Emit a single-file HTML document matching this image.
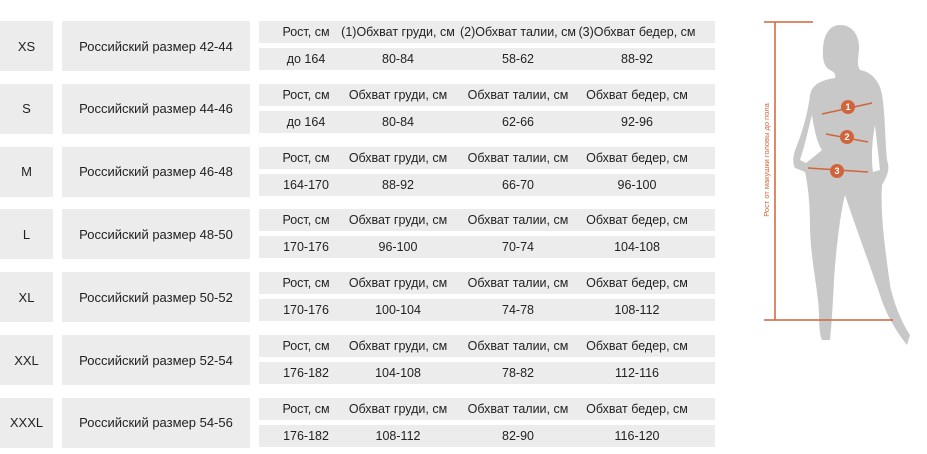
<!DOCTYPE html><html><head><meta charset="utf-8"><style>
body{margin:0;width:927px;height:454px;background:#fff;font-family:"Liberation Sans",sans-serif;font-size:13px;color:#222;position:relative;overflow:hidden}
.c{position:absolute;background:#ececec;display:flex;align-items:center;justify-content:center;white-space:nowrap}
.s{position:absolute;left:259px;width:456px;height:22px;background:#ececec;font-size:12.5px}
.s span{position:absolute;top:0;line-height:22px;transform:translateX(-50%);white-space:nowrap}
</style></head><body>
<div id="t"></div>
<script>
var d=[["XS","42-44","до 164","80-84","58-62","88-92",1],["S","44-46","до 164","80-84","62-66","92-96"],["M","46-48","164-170","88-92","66-70","96-100"],["L","48-50","170-176","96-100","70-74","104-108"],["XL","50-52","170-176","100-104","74-78","108-112"],["XXL","52-54","176-182","104-108","78-82","112-116"],["XXXL","54-56","176-182","108-112","82-90","116-120"]];
var h="";d.forEach(function(r,i){var y=21+i*62.8;
h+='<div class="c" style="left:0;top:'+y+'px;width:53px;height:50px">'+r[0]+'</div>';
h+='<div class="c" style="left:62px;top:'+y+'px;width:188px;height:50px">Российский размер '+r[1]+'</div>';
var hd=r[6]?["Рост, см","(1)Обхват груди, см","(2)Обхват талии, см","(3)Обхват бедер, см"]:["Рост, см","Обхват груди, см","Обхват талии, см","Обхват бедер, см"];
var xs=[306,398,518,637];
h+='<div class="s" style="top:'+y+'px">'+hd.map(function(t,k){return '<span style="left:'+(xs[k]-259)+'px">'+t+'</span>'}).join('')+'</div>';
h+='<div class="s" style="top:'+(y+27)+'px">'+[r[2],r[3],r[4],r[5]].map(function(t,k){return '<span style="left:'+(xs[k]-259)+'px">'+t+'</span>'}).join('')+'</div>';
});document.getElementById('t').innerHTML=h;
</script>
<svg style="position:absolute;left:0;top:0" width="927" height="454">
<path fill="#c8c8c8" d="M840 25 C828 25 822 38 823 55 C823 63 826 68 830 70 C834 72 836 74 835 78 C822 80 812 84 810 95 C808 112 803 130 797 145 C793 155 792 162 795 168 L805 172 C808 185 810 205 810 225 C810 250 815 275 818 300 C820 318 818 330 822 340 L830 340 C832 320 833 300 834 280 C836 250 840 215 845 195 C855 225 868 260 880 295 C885 312 895 330 907 345 L910 335 C900 320 893 300 890 285 C886 255 880 215 882 185 C888 175 890 168 887 160 C885 140 885 110 882 95 C880 82 872 72 860 70 C857 66 858 60 859 50 C860 35 852 25 840 25 Z M812 115 C814 130 818 145 822 150 C816 155 810 160 806 163 L800 160 C805 145 808 130 812 115 Z M875 125 L880 170 L873 172 C871 160 872 140 875 125 Z" />
<g stroke="#d0643c" stroke-width="1.5" fill="none">
<line x1="764" y1="22" x2="813" y2="22"/><line x1="764" y1="320" x2="893" y2="320"/><line x1="775" y1="22" x2="775" y2="320"/>
<line x1="822" y1="114" x2="872" y2="103"/><line x1="826" y1="134" x2="868" y2="142"/><line x1="808" y1="168" x2="868" y2="172"/>
</g>
<g fill="#d0643c"><circle cx="848" cy="107" r="7"/><circle cx="847" cy="137" r="7"/><circle cx="837" cy="171" r="7"/></g>
<g fill="#fff" font-size="9" font-weight="bold" text-anchor="middle"><text x="848" y="110">1</text><text x="847" y="140">2</text><text x="837" y="174">3</text></g>
<text transform="translate(769,160) rotate(-90)" text-anchor="middle" font-size="7.5" fill="#d0643c">Рост от макушки головы до пола</text>
</svg>
</body></html>
